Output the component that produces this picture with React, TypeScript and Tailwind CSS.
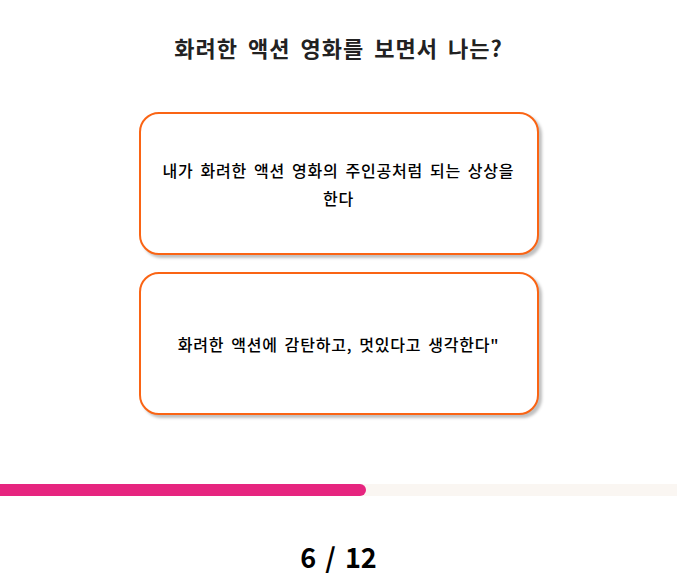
export default function App() {
  const font = { fontFamily: '"Noto Sans CJK KR", "Noto Sans", sans-serif' };
  return (
    <div className="w-[677px] h-[582px] bg-white flex flex-col items-center" style={font}>
      <h1 className="mt-[30px] h-[34px] leading-[34px] text-[22px] font-bold text-[#222] tracking-[1px] [word-spacing:4px]">화려한 액션 영화를 보면서 나는?</h1>
      <div className="mt-[48px] flex flex-col gap-[17px]">
        <div className="w-[400px] h-[143px] rounded-[20px] border-2 border-[#fa6414] bg-white shadow-[3px_3px_3px_rgba(0,0,0,0.25)] flex items-center justify-center px-[18px] text-center text-[16px] leading-[28px] font-medium text-black tracking-[0.8px] [word-spacing:2.5px]">
          내가 화려한 액션 영화의 주인공처럼 되는 상상을 한다
        </div>
        <div className="w-[400px] h-[143px] rounded-[20px] border-2 border-[#fa6414] bg-white shadow-[3px_3px_3px_rgba(0,0,0,0.25)] flex items-center justify-center px-[18px] text-center text-[16px] leading-[28px] font-medium text-black tracking-[0.8px] [word-spacing:2.5px]">
          화려한 액션에 감탄하고, 멋있다고 생각한다"
        </div>
      </div>
      <div className="mt-[69px] w-full h-[12px] bg-[#faf6f2]">
        <div className="h-full w-[366px] bg-[#e6257f] rounded-r-full" />
      </div>
      <div className="mt-[44px] text-[27px] font-bold text-black leading-[34px] [word-spacing:3px]">6 / 12</div>
    </div>
  );
}
